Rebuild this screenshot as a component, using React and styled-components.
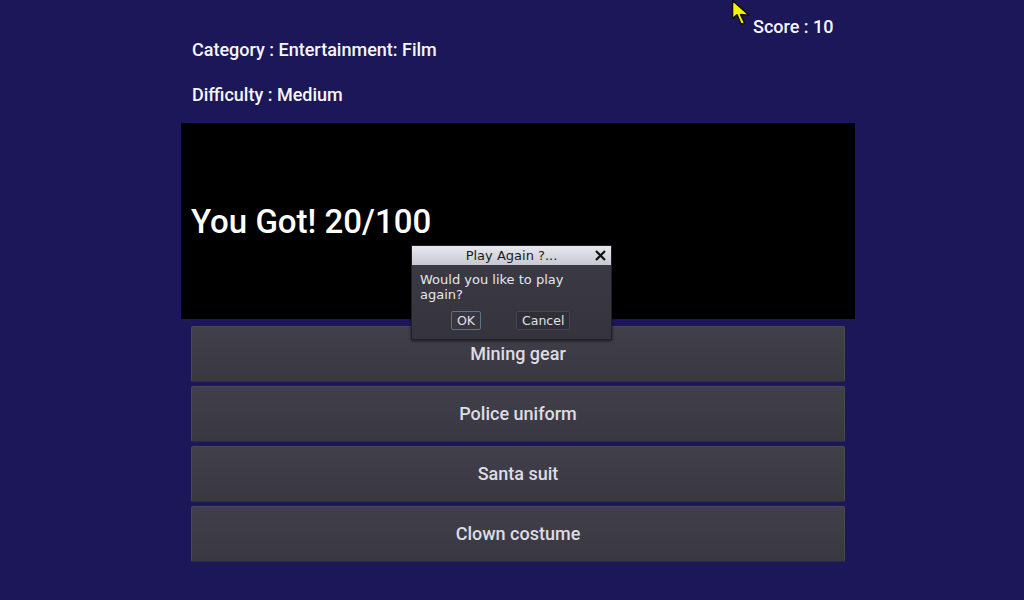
import React from 'react';
import styled, { createGlobalStyle } from 'styled-components';

const GlobalStyle = createGlobalStyle`
  html, body {
    margin: 0;
    padding: 0;
    background: #1c1758;
  }
`;

const Screen = styled.div`
  position: relative;
  width: 1024px;
  height: 600px;
  background: #1c1758;
  overflow: hidden;
  font-family: Roboto, 'Liberation Sans', sans-serif;
  font-weight: 500;
`;

const Column = styled.div`
  width: 674px;
  margin-left: 181px;
  padding-top: 16px;
  display: flex;
  flex-direction: column;
`;

const Line = styled.div`
  color: #f6f6fa;
  font-size: 18px;
  line-height: 22px;
  padding-left: ${({ $indent }) => $indent || 11}px;
  margin-top: ${({ $gap }) => $gap || 0}px;
`;

const ResultPanel = styled.div`
  margin-top: 17px;
  height: 196px;
  background: #000;
  display: flex;
  align-items: center;
  padding-left: 10px;
  color: #fff;
  font-size: 33px;
`;

const Answers = styled.div`
  margin-top: 7px;
  padding: 0 10px;
  display: flex;
  flex-direction: column;
  gap: 4px;
`;

const Answer = styled.button`
  height: 56px;
  border: 1px solid #4a4853;
  border-bottom-color: #2f2d36;
  border-radius: 2px;
  background: linear-gradient(#413f4a, #393741);
  color: #dedde3;
  font-family: Roboto, 'Liberation Sans', sans-serif;
  font-weight: 500;
  font-size: 18px;
  padding: 0 0 2px 0;
  cursor: pointer;
`;

const Dialog = styled.div`
  position: absolute;
  left: 411px;
  top: 245px;
  width: 201px;
  height: 95px;
  box-sizing: border-box;
  border: 1px solid #202027;
  background: linear-gradient(#3c3b45, #35343d);
  box-shadow: 0 1px 3px rgba(0, 0, 0, 0.6);
  display: flex;
  flex-direction: column;
  font-family: 'DejaVu Sans', sans-serif;
  font-weight: 400;
`;

const TitleBar = styled.div`
  height: 19px;
  display: flex;
  align-items: center;
  justify-content: center;
  position: relative;
  background: linear-gradient(#e8e8ee, #c8c8d2);
  color: #1a1a1e;
  font-size: 13px;
`;

const Close = styled.svg`
  position: absolute;
  right: 4px;
  top: 3px;
`;

const Message = styled.div`
  padding: 7px 8px 0 8px;
  color: #e6e6ea;
  font-size: 13px;
  line-height: 15px;
`;

const ButtonRow = styled.div`
  display: flex;
  margin-top: 9px;
  padding-left: 39px;
  gap: 35px;
`;

const DialogButton = styled.button`
  height: 19px;
  box-sizing: border-box;
  padding: 0 5px;
  border-radius: 2px;
  border: 1px solid ${({ $focus }) => ($focus ? '#58738f' : '#46454f')};
  background: ${({ $focus }) => ($focus ? '#363541' : '#2f2e37')};
  color: #e0e0e6;
  font-family: 'DejaVu Sans', sans-serif;
  font-size: 12.5px;
  line-height: 17px;
`;

const Pointer = styled.svg`
  position: absolute;
  left: 730px;
  top: 0;
`;

const answers = ['Mining gear', 'Police uniform', 'Santa suit', 'Clown costume'];

const App = () => {
  return (
    <Screen>
      <GlobalStyle />
      <Column>
        <Line $indent={572}>Score : 10</Line>
        <Line $gap={1}>Category : Entertainment: Film</Line>
        <Line $gap={23}>Difficulty : Medium</Line>
        <ResultPanel>You Got! 20/100</ResultPanel>
        <Answers>
          {answers.map((a) => (
            <Answer key={a}>{a}</Answer>
          ))}
        </Answers>
      </Column>

      <Dialog>
        <TitleBar>
          Play Again ?...
          <Close width="13" height="13" viewBox="0 0 13 13">
            <path d="M2 2 L11 11 M11 2 L2 11" stroke="#111" strokeWidth="2.2" />
          </Close>
        </TitleBar>
        <Message>Would you like to play again?</Message>
        <ButtonRow>
          <DialogButton $focus>OK</DialogButton>
          <DialogButton>Cancel</DialogButton>
        </ButtonRow>
      </Dialog>

      <Pointer width="22" height="27" viewBox="0 0 22 27">
        <path
          d="M2.5 0.5 L2.5 18.5 L7 14.8 L11.2 24.5 L14.6 23 L10.6 14.6 L19 15.2 Z"
          fill="#f5f500"
          stroke="#141414"
          strokeWidth="1.6"
          strokeLinejoin="round"
        />
      </Pointer>
    </Screen>
  );
};

export default App;
